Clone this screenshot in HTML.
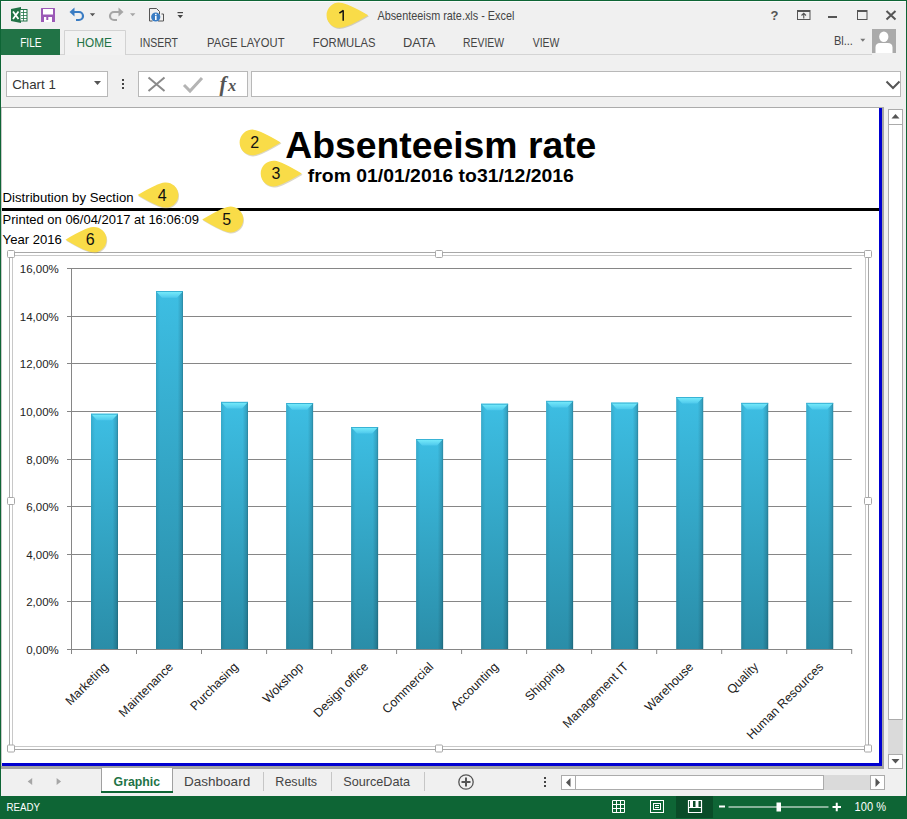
<!DOCTYPE html><html><head><meta charset="utf-8"><style>*{margin:0;padding:0}html,body{width:907px;height:819px;overflow:hidden;background:#f0f0f0}svg{position:absolute;left:0;top:0;display:block}</style></head><body><svg width="907" height="819" viewBox="0 0 907 819">
<rect x="0" y="0" width="907" height="819" fill="#f0f0f0" />
<rect x="0" y="0" width="907" height="1" fill="#0e6535" />
<rect x="0" y="0" width="1" height="796" fill="#0e6535" />
<rect x="906" y="0" width="1" height="796" fill="#0e6535" />
<rect x="1" y="1" width="905" height="1" fill="#fbfbfb" />
<path d="M64.5,55 V30.5 H125.5 V55" fill="#f2f2f2" stroke="#d2d2d2"/>
<rect x="1" y="54" width="63" height="1" fill="#d4d4d4" />
<rect x="126" y="54" width="746" height="1" fill="#d4d4d4" />
<rect x="1" y="29" width="59" height="26" fill="#217346" />
<rect x="6.5" y="71.5" width="101" height="25" fill="#fff" stroke="#b8b8b8"/>
<rect x="138.5" y="71.5" width="109" height="25" fill="#fff" stroke="#b8b8b8"/>
<rect x="251.5" y="71.5" width="649" height="25" fill="#fff" stroke="#b8b8b8"/>
<rect x="1" y="107" width="883" height="1" fill="#ababab" />
<rect x="1" y="108" width="881" height="658" fill="#fff" />
<rect x="1" y="108" width="1" height="660" fill="#c8c8c8" />
<rect x="879" y="108" width="3" height="658" fill="#0000d0" />
<rect x="2" y="763" width="880" height="3" fill="#0000d0" />
<rect x="882" y="108" width="2" height="660" fill="#a6a6a6" />
<rect x="1" y="766" width="883" height="3" fill="#a2a2a2" />
<defs><linearGradient id="bv" x1="0" y1="0" x2="0" y2="1"><stop offset="0" stop-color="#3dbee3"/><stop offset="1" stop-color="#2a8da8"/></linearGradient><linearGradient id="bh" x1="0" y1="0" x2="1" y2="0"><stop offset="0" stop-color="#000" stop-opacity="0.10"/><stop offset="0.15" stop-color="#000" stop-opacity="0"/><stop offset="0.8" stop-color="#000" stop-opacity="0"/><stop offset="0.95" stop-color="#000" stop-opacity="0.15"/><stop offset="1" stop-color="#000" stop-opacity="0.3"/></linearGradient><linearGradient id="bt" x1="0" y1="0" x2="0" y2="1"><stop offset="0" stop-color="#7aeefc"/><stop offset="1" stop-color="#4ec9ec"/></linearGradient></defs>
<text transform="translate(285.19,158.4) scale(1.0092,1)" font-family="Liberation Sans" font-size="37" font-weight="bold" fill="#000">Absenteeism rate</text>
<text transform="translate(307.80,181.6) scale(1.0200,1)" font-family="Liberation Sans" font-size="19" font-weight="bold" fill="#000">from 01/01/2016 to31/12/2016</text>
<text transform="translate(2.59,201.8) scale(1.0133,1)" font-family="Liberation Sans" font-size="13" font-weight="normal" fill="#000">Distribution by Section</text>
<text transform="translate(2.60,223.7) scale(0.9995,1)" font-family="Liberation Sans" font-size="13" font-weight="normal" fill="#000">Printed on 06/04/2017 at 16:06:09</text>
<text transform="translate(2.59,243.7) scale(1.0105,1)" font-family="Liberation Sans" font-size="13" font-weight="normal" fill="#000">Year 2016</text>
<rect x="2" y="208" width="877" height="3" fill="#000" />
<rect x="9.5" y="252.5" width="859" height="497" fill="none" stroke="#a8a8a8" stroke-width="1"/>
<rect x="12.5" y="255.5" width="853" height="491" fill="none" stroke="#c8c8c8" stroke-width="1"/>
<rect x="7.5" y="250.5" width="7" height="7" rx="1" fill="#fff" stroke="#a8a8a8"/>
<rect x="435.5" y="250.5" width="7" height="7" rx="1" fill="#fff" stroke="#a8a8a8"/>
<rect x="864.5" y="250.5" width="7" height="7" rx="1" fill="#fff" stroke="#a8a8a8"/>
<rect x="7.5" y="497.5" width="7" height="7" rx="1" fill="#fff" stroke="#a8a8a8"/>
<rect x="864.5" y="497.5" width="7" height="7" rx="1" fill="#fff" stroke="#a8a8a8"/>
<rect x="7.5" y="745.0" width="7" height="7" rx="1" fill="#fff" stroke="#a8a8a8"/>
<rect x="435.5" y="745.0" width="7" height="7" rx="1" fill="#fff" stroke="#a8a8a8"/>
<rect x="864.5" y="745.0" width="7" height="7" rx="1" fill="#fff" stroke="#a8a8a8"/>
<line x1="67" y1="649.5" x2="851.7" y2="649.5" stroke="#868686" stroke-width="1"/>
<text x="58.8" y="653.8" font-family="Liberation Sans" font-size="11.5" fill="#222" text-anchor="end">0,00%</text>
<line x1="67" y1="601.5" x2="851.7" y2="601.5" stroke="#868686" stroke-width="1"/>
<text x="58.8" y="605.8" font-family="Liberation Sans" font-size="11.5" fill="#222" text-anchor="end">2,00%</text>
<line x1="67" y1="554.5" x2="851.7" y2="554.5" stroke="#868686" stroke-width="1"/>
<text x="58.8" y="558.8" font-family="Liberation Sans" font-size="11.5" fill="#222" text-anchor="end">4,00%</text>
<line x1="67" y1="506.5" x2="851.7" y2="506.5" stroke="#868686" stroke-width="1"/>
<text x="58.8" y="510.8" font-family="Liberation Sans" font-size="11.5" fill="#222" text-anchor="end">6,00%</text>
<line x1="67" y1="459.5" x2="851.7" y2="459.5" stroke="#868686" stroke-width="1"/>
<text x="58.8" y="463.8" font-family="Liberation Sans" font-size="11.5" fill="#222" text-anchor="end">8,00%</text>
<line x1="67" y1="411.5" x2="851.7" y2="411.5" stroke="#868686" stroke-width="1"/>
<text x="58.8" y="415.8" font-family="Liberation Sans" font-size="11.5" fill="#222" text-anchor="end">10,00%</text>
<line x1="67" y1="363.5" x2="851.7" y2="363.5" stroke="#868686" stroke-width="1"/>
<text x="58.8" y="367.8" font-family="Liberation Sans" font-size="11.5" fill="#222" text-anchor="end">12,00%</text>
<line x1="67" y1="316.5" x2="851.7" y2="316.5" stroke="#868686" stroke-width="1"/>
<text x="58.8" y="320.8" font-family="Liberation Sans" font-size="11.5" fill="#222" text-anchor="end">14,00%</text>
<line x1="67" y1="268.5" x2="851.7" y2="268.5" stroke="#868686" stroke-width="1"/>
<text x="58.8" y="272.8" font-family="Liberation Sans" font-size="11.5" fill="#222" text-anchor="end">16,00%</text>
<line x1="71.5" y1="268" x2="71.5" y2="654" stroke="#868686"/>
<line x1="71.5" y1="649" x2="71.5" y2="654" stroke="#868686"/>
<line x1="136.5" y1="649" x2="136.5" y2="654" stroke="#868686"/>
<line x1="201.5" y1="649" x2="201.5" y2="654" stroke="#868686"/>
<line x1="266.6" y1="649" x2="266.6" y2="654" stroke="#868686"/>
<line x1="331.6" y1="649" x2="331.6" y2="654" stroke="#868686"/>
<line x1="396.6" y1="649" x2="396.6" y2="654" stroke="#868686"/>
<line x1="461.6" y1="649" x2="461.6" y2="654" stroke="#868686"/>
<line x1="526.6" y1="649" x2="526.6" y2="654" stroke="#868686"/>
<line x1="591.6" y1="649" x2="591.6" y2="654" stroke="#868686"/>
<line x1="656.7" y1="649" x2="656.7" y2="654" stroke="#868686"/>
<line x1="721.7" y1="649" x2="721.7" y2="654" stroke="#868686"/>
<line x1="786.7" y1="649" x2="786.7" y2="654" stroke="#868686"/>
<line x1="851.7" y1="649" x2="851.7" y2="654" stroke="#868686"/>
<rect x="91.0" y="413.8" width="27" height="235.2" fill="url(#bv)"/>
<rect x="91.0" y="413.8" width="27" height="235.2" fill="url(#bh)"/>
<polygon points="91.0,413.8 118.0,413.8 112.0,420.3 97.0,420.3" fill="url(#bt)"/>
<rect x="91.0" y="413.8" width="27" height="0.8" fill="#2aa6cc"/>
<text font-family="Liberation Sans" font-size="12.4" fill="#222" text-anchor="end" transform="translate(109.0,667.5) rotate(-45)">Marketing</text>
<rect x="156.0" y="291.2" width="27" height="357.8" fill="url(#bv)"/>
<rect x="156.0" y="291.2" width="27" height="357.8" fill="url(#bh)"/>
<polygon points="156.0,291.2 183.0,291.2 177.0,297.7 162.0,297.7" fill="url(#bt)"/>
<rect x="156.0" y="291.2" width="27" height="0.8" fill="#2aa6cc"/>
<text font-family="Liberation Sans" font-size="12.4" fill="#222" text-anchor="end" transform="translate(174.0,667.5) rotate(-45)">Maintenance</text>
<rect x="221.0" y="401.9" width="27" height="247.1" fill="url(#bv)"/>
<rect x="221.0" y="401.9" width="27" height="247.1" fill="url(#bh)"/>
<polygon points="221.0,401.9 248.0,401.9 242.0,408.4 227.0,408.4" fill="url(#bt)"/>
<rect x="221.0" y="401.9" width="27" height="0.8" fill="#2aa6cc"/>
<text font-family="Liberation Sans" font-size="12.4" fill="#222" text-anchor="end" transform="translate(239.0,667.5) rotate(-45)">Purchasing</text>
<rect x="286.1" y="403.2" width="27" height="245.8" fill="url(#bv)"/>
<rect x="286.1" y="403.2" width="27" height="245.8" fill="url(#bh)"/>
<polygon points="286.1,403.2 313.1,403.2 307.1,409.7 292.1,409.7" fill="url(#bt)"/>
<rect x="286.1" y="403.2" width="27" height="0.8" fill="#2aa6cc"/>
<text font-family="Liberation Sans" font-size="12.4" fill="#222" text-anchor="end" transform="translate(304.1,667.5) rotate(-45)">Wokshop</text>
<rect x="351.1" y="427" width="27" height="222.0" fill="url(#bv)"/>
<rect x="351.1" y="427" width="27" height="222.0" fill="url(#bh)"/>
<polygon points="351.1,427 378.1,427 372.1,433.5 357.1,433.5" fill="url(#bt)"/>
<rect x="351.1" y="427" width="27" height="0.8" fill="#2aa6cc"/>
<text font-family="Liberation Sans" font-size="12.4" fill="#222" text-anchor="end" transform="translate(369.1,667.5) rotate(-45)">Design office</text>
<rect x="416.1" y="439" width="27" height="210.0" fill="url(#bv)"/>
<rect x="416.1" y="439" width="27" height="210.0" fill="url(#bh)"/>
<polygon points="416.1,439 443.1,439 437.1,445.5 422.1,445.5" fill="url(#bt)"/>
<rect x="416.1" y="439" width="27" height="0.8" fill="#2aa6cc"/>
<text font-family="Liberation Sans" font-size="12.4" fill="#222" text-anchor="end" transform="translate(434.1,667.5) rotate(-45)">Commercial</text>
<rect x="481.1" y="403.8" width="27" height="245.2" fill="url(#bv)"/>
<rect x="481.1" y="403.8" width="27" height="245.2" fill="url(#bh)"/>
<polygon points="481.1,403.8 508.1,403.8 502.1,410.3 487.1,410.3" fill="url(#bt)"/>
<rect x="481.1" y="403.8" width="27" height="0.8" fill="#2aa6cc"/>
<text font-family="Liberation Sans" font-size="12.4" fill="#222" text-anchor="end" transform="translate(499.1,667.5) rotate(-45)">Accounting</text>
<rect x="546.1" y="400.9" width="27" height="248.1" fill="url(#bv)"/>
<rect x="546.1" y="400.9" width="27" height="248.1" fill="url(#bh)"/>
<polygon points="546.1,400.9 573.1,400.9 567.1,407.4 552.1,407.4" fill="url(#bt)"/>
<rect x="546.1" y="400.9" width="27" height="0.8" fill="#2aa6cc"/>
<text font-family="Liberation Sans" font-size="12.4" fill="#222" text-anchor="end" transform="translate(564.1,667.5) rotate(-45)">Shipping</text>
<rect x="611.1" y="402.7" width="27" height="246.3" fill="url(#bv)"/>
<rect x="611.1" y="402.7" width="27" height="246.3" fill="url(#bh)"/>
<polygon points="611.1,402.7 638.1,402.7 632.1,409.2 617.1,409.2" fill="url(#bt)"/>
<rect x="611.1" y="402.7" width="27" height="0.8" fill="#2aa6cc"/>
<text font-family="Liberation Sans" font-size="12.4" fill="#222" text-anchor="end" transform="translate(629.1,667.5) rotate(-45)">Management IT</text>
<rect x="676.2" y="397" width="27" height="252.0" fill="url(#bv)"/>
<rect x="676.2" y="397" width="27" height="252.0" fill="url(#bh)"/>
<polygon points="676.2,397 703.2,397 697.2,403.5 682.2,403.5" fill="url(#bt)"/>
<rect x="676.2" y="397" width="27" height="0.8" fill="#2aa6cc"/>
<text font-family="Liberation Sans" font-size="12.4" fill="#222" text-anchor="end" transform="translate(694.2,667.5) rotate(-45)">Warehouse</text>
<rect x="741.2" y="402.9" width="27" height="246.1" fill="url(#bv)"/>
<rect x="741.2" y="402.9" width="27" height="246.1" fill="url(#bh)"/>
<polygon points="741.2,402.9 768.2,402.9 762.2,409.4 747.2,409.4" fill="url(#bt)"/>
<rect x="741.2" y="402.9" width="27" height="0.8" fill="#2aa6cc"/>
<text font-family="Liberation Sans" font-size="12.4" fill="#222" text-anchor="end" transform="translate(759.2,667.5) rotate(-45)">Quality</text>
<rect x="806.2" y="402.9" width="27" height="246.1" fill="url(#bv)"/>
<rect x="806.2" y="402.9" width="27" height="246.1" fill="url(#bh)"/>
<polygon points="806.2,402.9 833.2,402.9 827.2,409.4 812.2,409.4" fill="url(#bt)"/>
<rect x="806.2" y="402.9" width="27" height="0.8" fill="#2aa6cc"/>
<text font-family="Liberation Sans" font-size="12.4" fill="#222" text-anchor="end" transform="translate(824.2,667.5) rotate(-45)">Human Resources</text>
<rect x="888" y="109" width="15" height="660" fill="#dadada" />
<rect x="888.5" y="109.5" width="14" height="15" fill="#fff" stroke="#ababab"/>
<rect x="888.5" y="124.5" width="14" height="595" fill="#fff" stroke="#ababab"/>
<rect x="888.5" y="754.5" width="14" height="14" fill="#fff" stroke="#ababab"/>
<path d="M101.5,768 V792 M172.5,768 V792" stroke="#a0a0a0"/>
<rect x="102" y="768" width="70" height="23" fill="#fff" />
<rect x="101" y="791" width="72" height="2" fill="#0e6535" />
<text transform="translate(113.60,786) scale(0.9851,1)" font-family="Liberation Sans" font-size="12.5" font-weight="bold" fill="#217346">Graphic</text>
<text transform="translate(183.96,786.4) scale(1.0419,1)" font-family="Liberation Sans" font-size="13" font-weight="normal" fill="#444">Dashboard</text>
<text transform="translate(275.34,786.4) scale(0.9643,1)" font-family="Liberation Sans" font-size="13" font-weight="normal" fill="#444">Results</text>
<text transform="translate(343.33,786.4) scale(0.9721,1)" font-family="Liberation Sans" font-size="13" font-weight="normal" fill="#444">SourceData</text>
<rect x="263" y="772" width="1" height="19" fill="#c6c6c6" />
<rect x="331" y="772" width="1" height="19" fill="#c6c6c6" />
<rect x="424" y="772" width="1" height="19" fill="#c6c6c6" />
<rect x="561" y="775" width="324" height="15" fill="#dadada" />
<rect x="561.5" y="775.5" width="14" height="14" fill="#fff" stroke="#ababab"/>
<rect x="575.5" y="775.5" width="248" height="14" fill="#fff" stroke="#ababab"/>
<rect x="870.5" y="775.5" width="14" height="14" fill="#fff" stroke="#ababab"/>
<rect x="0" y="796" width="907" height="23" fill="#0e6535" />
<rect x="676" y="796" width="37" height="22" fill="#0a4c28" />
<text transform="translate(6.47,810.7) scale(0.9314,1)" font-family="Liberation Sans" font-size="10.5" font-weight="normal" fill="#fff">READY</text>
<text transform="translate(854.58,811) scale(0.9242,1)" font-family="Liberation Sans" font-size="12" font-weight="normal" fill="#fff">100 %</text>
<text transform="translate(377.40,20) scale(0.9060,1)" font-family="Liberation Sans" font-size="12" font-weight="normal" fill="#444">Absenteeism rate.xls - Excel</text>
<text transform="translate(20.15,46.9) scale(0.8458,1)" font-family="Liberation Sans" font-size="12" font-weight="normal" fill="#fff">FILE</text>
<text transform="translate(76.52,46.9) scale(0.9829,1)" font-family="Liberation Sans" font-size="12" font-weight="normal" fill="#217346">HOME</text>
<text transform="translate(139.83,46.9) scale(0.8721,1)" font-family="Liberation Sans" font-size="12" font-weight="normal" fill="#444">INSERT</text>
<text transform="translate(207.07,46.9) scale(0.9341,1)" font-family="Liberation Sans" font-size="12" font-weight="normal" fill="#444">PAGE LAYOUT</text>
<text transform="translate(312.86,46.9) scale(0.9400,1)" font-family="Liberation Sans" font-size="12" font-weight="normal" fill="#444">FORMULAS</text>
<text transform="translate(402.93,46.9) scale(1.0690,1)" font-family="Liberation Sans" font-size="12" font-weight="normal" fill="#444">DATA</text>
<text transform="translate(463.03,46.9) scale(0.8674,1)" font-family="Liberation Sans" font-size="12" font-weight="normal" fill="#444">REVIEW</text>
<text transform="translate(532.70,46.9) scale(0.8710,1)" font-family="Liberation Sans" font-size="12" font-weight="normal" fill="#444">VIEW</text>
<text transform="translate(833.88,44.5) scale(0.9211,1)" font-family="Liberation Sans" font-size="12" font-weight="normal" fill="#444">Bl...</text>
<text transform="translate(12.13,88.9) scale(1.0675,1)" font-family="Liberation Sans" font-size="12.5" font-weight="normal" fill="#333">Chart 1</text>
<path d="M11,9 L21,7 L21,23 L11,21 Z" fill="#217346"/>
<rect x="20" y="9.5" width="7" height="11.5" fill="#fff" stroke="#217346" stroke-width="1"/>
<path d="M21,12.5h6 M21,15.5h6 M21,18.5h6 M23.5,10v11" stroke="#217346" stroke-width="0.8"/>
<path d="M13,11.5 L18.5,19 M18.5,11.5 L13,19" stroke="#fff" stroke-width="1.8"/>
<rect x="41" y="8" width="14" height="14" fill="#9b59b6" rx="0.5"/>
<rect x="43" y="9" width="10" height="5.5" fill="#fff"/>
<rect x="44" y="17" width="8" height="5" fill="#fff"/><rect x="46.3" y="17" width="2" height="3" fill="#9b59b6"/>
<path d="M72,12 L79,12 A4,4 0 0 1 79,20 L76,20" fill="none" stroke="#3a7cc3" stroke-width="2.2"/>
<path d="M69.5,12 L74.5,7.5 L74.5,16.5 Z" fill="#3a7cc3"/>
<path d="M89.8,13.2 h5.4 l-2.7,3 z" fill="#555"/>
<path d="M121,12 L114,12 A4,4 0 0 0 114,20 L117,20" fill="none" stroke="#a6a6a6" stroke-width="2.2"/>
<path d="M123.5,12 L118.5,7.5 L118.5,16.5 Z" fill="#a6a6a6"/>
<path d="M130,13.2 h5.4 l-2.7,3 z" fill="#a6a6a6"/>
<path d="M149.5,8.5 h7 l3,3 v3 M149.5,8.5 v12.5 h3 M158,21 h5.5 v-7 h-2" fill="none" stroke="#555" stroke-width="1"/>
<circle cx="155.7" cy="17" r="4.6" fill="#3a7cc3"/>
<rect x="155" y="16" width="1.6" height="4" fill="#fff"/><rect x="155" y="13.8" width="1.6" height="1.5" fill="#fff"/>
<rect x="177.5" y="12" width="5.5" height="1.2" fill="#444"/><path d="M177.5,15 h5.5 l-2.75,3.2 z" fill="#444"/>
<text x="774.6" y="19.8" font-family="Liberation Sans" font-size="13" font-weight="bold" fill="#555" text-anchor="middle">?</text>
<rect x="797.5" y="10.5" width="12.5" height="9" fill="none" stroke="#555" stroke-width="1"/><rect x="797.5" y="10.5" width="12.5" height="1.5" fill="#555"/>
<path d="M803.75,18.5 v-5 M801.5,15.5 l2.25,-2.25 l2.25,2.25" fill="none" stroke="#555" stroke-width="1.1"/>
<rect x="828" y="16" width="9" height="2" fill="#555"/>
<rect x="857.5" y="10.5" width="9.5" height="9" fill="none" stroke="#555" stroke-width="1"/><rect x="857.5" y="10" width="9.5" height="2" fill="#555"/>
<path d="M886.5,11 L895.5,19.5 M895.5,11 L886.5,19.5" stroke="#555" stroke-width="2"/>
<path d="M860.3,38.8 h5 l-2.5,2.9 z" fill="#777"/>
<rect x="872" y="29" width="24" height="24" fill="#aaaaaa"/>
<ellipse cx="883.8" cy="36.8" rx="4.6" ry="5.2" fill="#fff"/><path d="M875.5,53 V47.5 Q875.5,43 880,43 H887.8 Q892.5,43 892.5,47.5 V53 Z" fill="#fff"/>
<path d="M94,81 h7 l-3.5,4 z" fill="#555"/>
<rect x="122" y="79" width="2" height="2" fill="#444"/><rect x="122" y="83" width="2" height="2" fill="#444"/><rect x="122" y="87" width="2" height="2" fill="#444"/>
<path d="M148.5,77.5 L164.5,91 M164.5,77.5 L148.5,91" stroke="#8a8a8a" stroke-width="2"/>
<path d="M184,85 L190,91 L202,78" fill="none" stroke="#b4b4b4" stroke-width="3"/>
<text x="219.5" y="90.5" font-family="Liberation Serif" font-style="italic" font-weight="bold" font-size="21" fill="#555">f</text><text x="228" y="90.5" font-family="Liberation Serif" font-style="italic" font-weight="bold" font-size="16.5" fill="#555">x</text>
<path d="M886.5,81.5 L893,88 L899.5,81.5" fill="none" stroke="#555" stroke-width="2"/>
<path d="M891.5,118.5 h8 l-4,-4.5 z" fill="#555"/>
<path d="M891.5,759 h8 l-4,4.5 z" fill="#555"/>
<path d="M566,782.5 l4.5,-4.5 v9 z" fill="#555"/>
<path d="M880,782.5 l-4.5,-4.5 v9 z" fill="#555"/>
<path d="M27.7,781.5 l4.5,-3.5 v7 z" fill="#a6a6a6"/><path d="M61.1,781.5 l-4.5,-3.5 v7 z" fill="#a6a6a6"/>
<circle cx="466" cy="782" r="7.2" fill="none" stroke="#555" stroke-width="1.3"/><path d="M466,777.5 v9 M461.5,782 h9" stroke="#555" stroke-width="2"/>
<rect x="544" y="777" width="2" height="2" fill="#444"/><rect x="544" y="781" width="2" height="2" fill="#444"/><rect x="544" y="785" width="2" height="2" fill="#444"/>
<path d="M612.5,800.5 h12 v12 h-12 z M612.5,804.5 h12 M612.5,808.5 h12 M616.5,800.5 v12 M620.5,800.5 v12" fill="none" stroke="#fff" stroke-width="1"/>
<rect x="650.5" y="800.5" width="13" height="12" fill="none" stroke="#fff"/><rect x="653.5" y="803.5" width="7" height="6" fill="none" stroke="#fff"/><path d="M655,805.5 h4 M655,807.5 h4" stroke="#fff"/>
<path d="M688.5,800.5 h13 v12 h-13 z" fill="none" stroke="#fff" stroke-width="1.2"/><rect x="690" y="801" width="3" height="6" fill="#fff"/><rect x="695.5" y="801" width="3" height="6" fill="#fff"/><path d="M688.5,807.5 h13" stroke="#fff"/>
<rect x="719" y="805.5" width="6" height="2" fill="#fff"/>
<rect x="728.5" y="806.5" width="100" height="1" fill="#fff"/>
<rect x="776.5" y="802.5" width="4.5" height="9" fill="#fff"/>
<path d="M832.5,807 h8.5 M836.75,802.75 v8.5" stroke="#fff" stroke-width="2"/>
<path d="M29.00,0 Q8.96,-12.04 0.82,-12.57 A12.6,12.6 0 1 0 0.82,12.57 Q8.96,12.04 29.00,0 Z" fill="#8a7a40" opacity="0.3" transform="translate(339.90,16.30) rotate(0)"/>
<path d="M29.00,0 Q8.96,-12.04 0.82,-12.57 A12.6,12.6 0 1 0 0.82,12.57 Q8.96,12.04 29.00,0 Z" fill="#f9dc48" transform="translate(339.20,15.20) rotate(0)"/>
<path d="M343.2,10.2 V20.8 M343.4,10.3 L339.4,13.2" stroke="#111" stroke-width="1.5" fill="none"/>
<path d="M28.25,0 Q7.95,-12.20 1.13,-12.80 A12.85,12.85 0 1 0 1.13,12.80 Q7.95,12.20 28.25,0 Z" fill="#8a7a40" opacity="0.3" transform="translate(253.15,143.55) rotate(0)"/>
<path d="M28.25,0 Q7.95,-12.20 1.13,-12.80 A12.85,12.85 0 1 0 1.13,12.80 Q7.95,12.20 28.25,0 Z" fill="#f9dc48" transform="translate(252.45,142.45) rotate(0)"/>
<text x="254.8" y="148.0" font-family="Liberation Sans" font-size="16" fill="#111" text-anchor="middle">2</text>
<path d="M28.25,0 Q7.95,-12.20 1.13,-12.80 A12.85,12.85 0 1 0 1.13,12.80 Q7.95,12.20 28.25,0 Z" fill="#8a7a40" opacity="0.3" transform="translate(274.25,174.65) rotate(0)"/>
<path d="M28.25,0 Q7.95,-12.20 1.13,-12.80 A12.85,12.85 0 1 0 1.13,12.80 Q7.95,12.20 28.25,0 Z" fill="#f9dc48" transform="translate(273.55,173.55) rotate(0)"/>
<text x="275.9" y="179.2" font-family="Liberation Sans" font-size="16" fill="#111" text-anchor="middle">3</text>
<path d="M28.05,0 Q8.19,-11.93 1.00,-12.51 A12.55,12.55 0 1 0 1.00,12.51 Q8.19,11.93 28.05,0 Z" fill="#8a7a40" opacity="0.3" transform="translate(166.45,196.15) rotate(180)"/>
<path d="M28.05,0 Q8.19,-11.93 1.00,-12.51 A12.55,12.55 0 1 0 1.00,12.51 Q8.19,11.93 28.05,0 Z" fill="#f9dc48" transform="translate(165.75,195.05) rotate(180)"/>
<text x="162.1" y="200.7" font-family="Liberation Sans" font-size="16" fill="#111" text-anchor="middle">4</text>
<path d="M28.20,0 Q7.83,-12.24 1.17,-12.85 A12.9,12.9 0 1 0 1.17,12.85 Q7.83,12.24 28.20,0 Z" fill="#8a7a40" opacity="0.3" transform="translate(231.10,220.60) rotate(180)"/>
<path d="M28.20,0 Q7.83,-12.24 1.17,-12.85 A12.9,12.9 0 1 0 1.17,12.85 Q7.83,12.24 28.20,0 Z" fill="#f9dc48" transform="translate(230.40,219.50) rotate(180)"/>
<text x="226.7" y="225.1" font-family="Liberation Sans" font-size="16" fill="#111" text-anchor="middle">5</text>
<path d="M28.35,0 Q8.32,-12.03 0.99,-12.61 A12.65,12.65 0 1 0 0.99,12.61 Q8.32,12.03 28.35,0 Z" fill="#8a7a40" opacity="0.3" transform="translate(94.55,240.75) rotate(180)"/>
<path d="M28.35,0 Q8.32,-12.03 0.99,-12.61 A12.65,12.65 0 1 0 0.99,12.61 Q8.32,12.03 28.35,0 Z" fill="#f9dc48" transform="translate(93.85,239.65) rotate(180)"/>
<text x="90.1" y="245.2" font-family="Liberation Sans" font-size="16" fill="#111" text-anchor="middle">6</text>
</svg></body></html>
